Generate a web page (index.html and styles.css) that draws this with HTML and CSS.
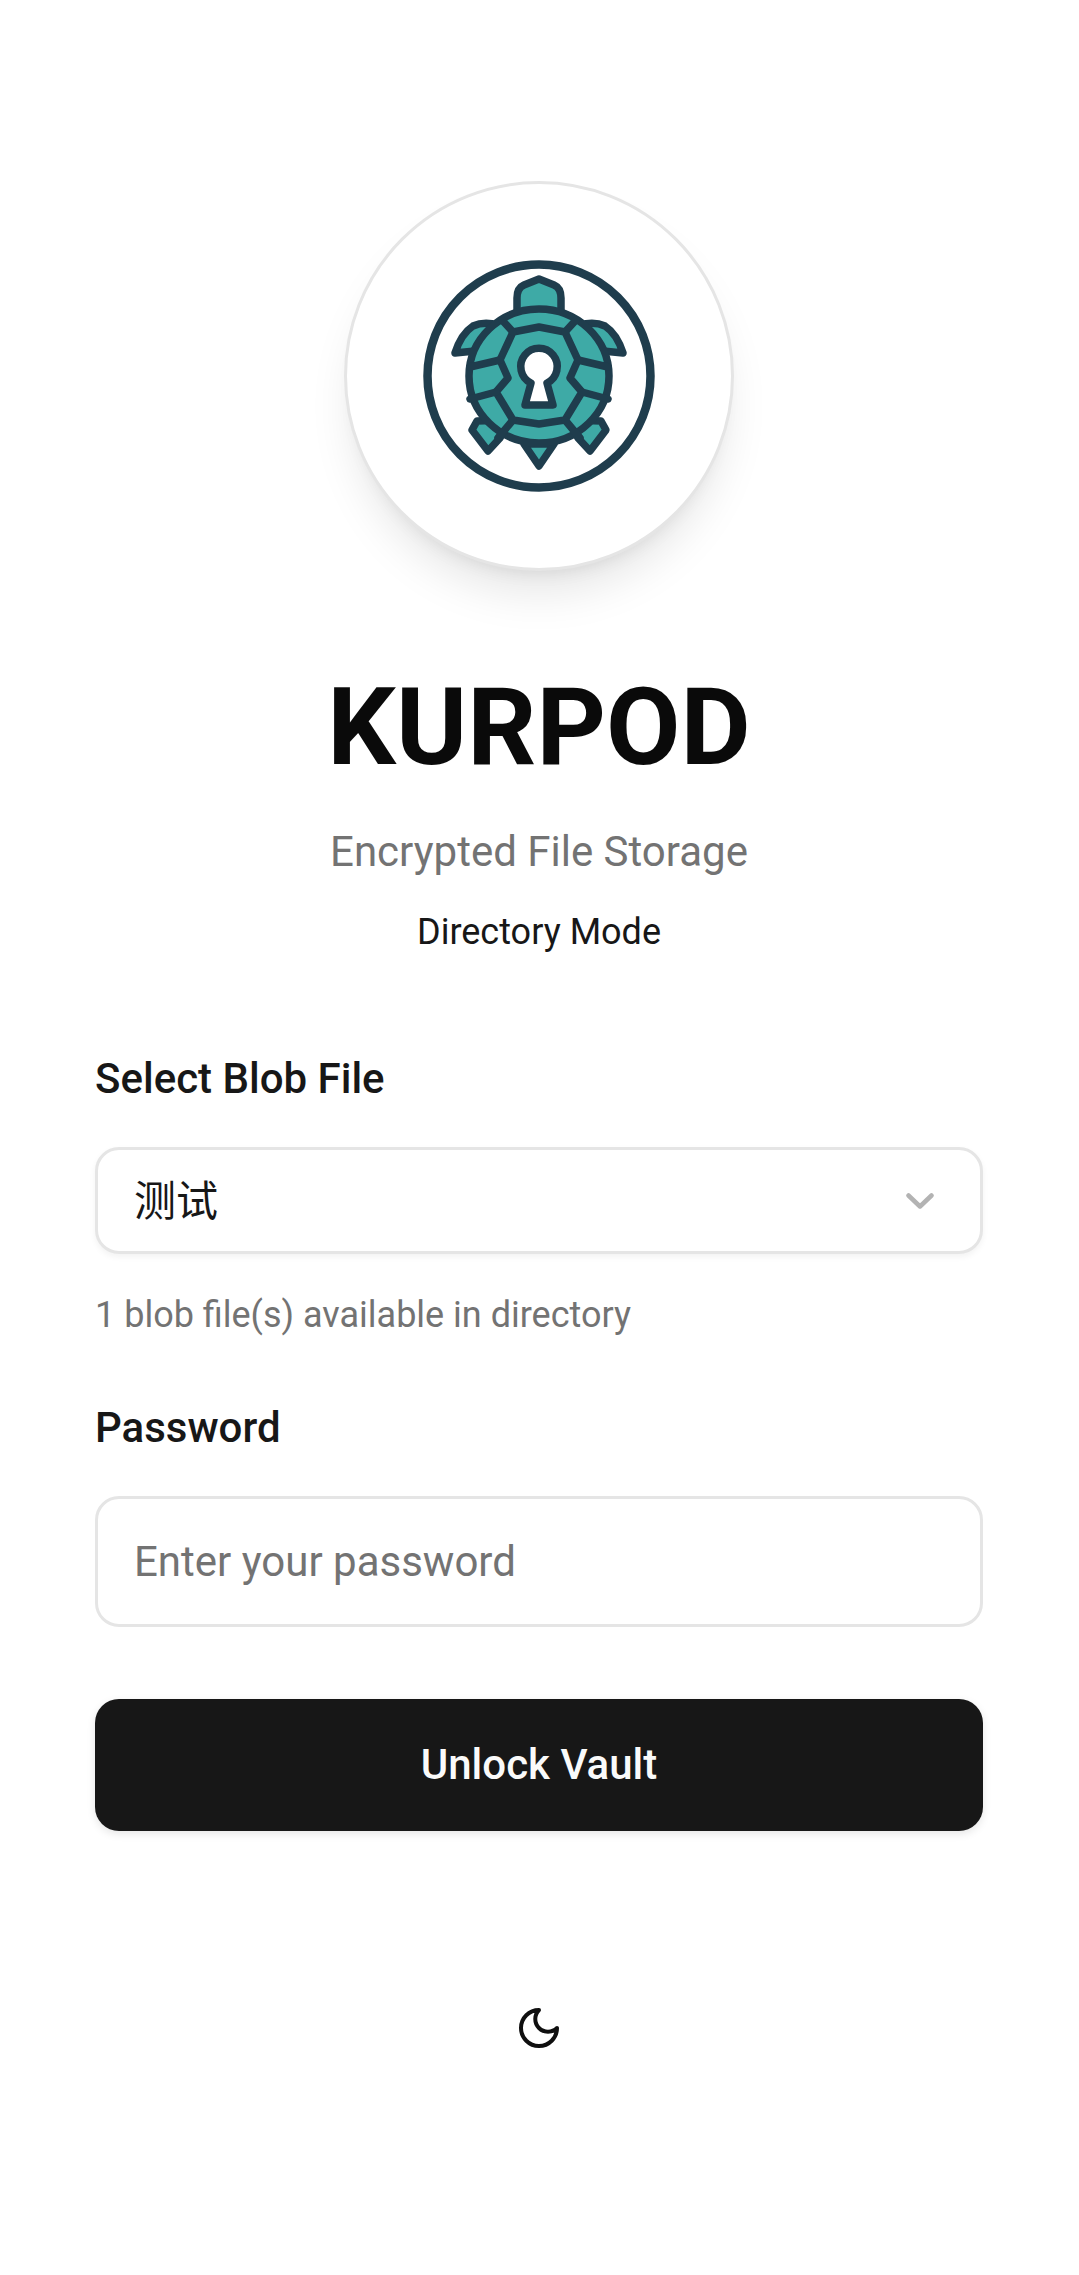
FILE: index.html
```html
<!doctype html>
<html>

<head>
    <title>KURPOD</title>
    <link rel="stylesheet" href="styles.css">
</head>

<body>
    <div id="login">
        <!-- Logo -->
        <div class="logoCircle">
            <svg class="logo" viewBox="-1 1 260 250" width="260" height="250">
                <circle cx="129" cy="126" r="111.500" fill="#fff" stroke="#1f3d4d" stroke-width="8.500" />
                <g fill="#3eaaa6" stroke="#1f3d4d" stroke-width="7.500" stroke-linejoin="round" stroke-linecap="round">
                    <path d="M107 62V48Q107 38 114 35L129 29 144 35Q151 38 151 48V62Z" />
                    <path d="M45 103Q51 84 63 76 74 71 88 75L65 101Z" />
                    <path d="M213 103Q207 84 195 76 184 71 170 75L193 101Z" />
                    <path d="M67 171 62 180 78 201 90 188 100 170Z" />
                    <path d="M191 171 196 180 180 201 168 188 158 170Z" />
                    <path d="M114 194 129 216 144 194Z" />
                    <ellipse cx="129" cy="126" rx="70" ry="67" />
                    <path d="M129 77 155 82 168 110 160 128 172 142 155 170 129 174 103 170 86 142 98 128 90 110 103 82Z" fill="none" />
                    <path d="M155 82 166 70M103 82 92 70M168 110 198 117M172 142 198 149M90 110 60 117M86 142 60 149M155 170 170 188M103 170 88 188" fill="none" />
                    <path d="M121 133A18.250 18.250 0 1 1 137 133L143 155H115Z" fill="#fff" />
                </g>
            </svg>
        </div>

        <h1 class="title">KURPOD</h1>
        <p class="subtitle">Encrypted File Storage</p>
        <p class="mode">Directory Mode</p>

        <form class="form">
            <label class="fieldLabel">Select Blob File</label>
            <div class="selectBox">
                <span class="selectValue">测试</span>
                <svg class="chevron" viewBox="0 0 28 16" width="28" height="16">
                    <path d="M2.500 2.500 14 13.500 25.500 2.500" fill="none" stroke="#b3b3b3" stroke-width="4.500" stroke-linecap="round" stroke-linejoin="round" />
                </svg>
            </div>
            <p class="hint">1 blob file(s) available in directory</p>

            <label class="fieldLabel passwordLabel">Password</label>
            <input class="passwordInput" type="password" placeholder="Enter your password">

            <button class="unlockBtn" type="button">Unlock Vault</button>
        </form>

        <!-- Theme toggle -->
        <div class="themeToggle">
            <svg viewBox="0 0 24 24" width="48" height="48" fill="none" stroke="#0f0f0f" stroke-width="2" stroke-linecap="round" stroke-linejoin="round">
                <path d="M12 3a6 6 0 0 0 9 9 9 9 0 1 1-9-9Z" />
            </svg>
        </div>
    </div>
</body>

</html>
```

FILE: styles.css
```css
* {
    box-sizing: border-box;
}

body {
    margin: 0;
    background: #fff;
    color: #0f0f0f;
    font-family: Roboto, "Noto Sans CJK SC", sans-serif;
}

#login {
    display: flex;
    flex-direction: column;
    align-items: center;
    padding: 181px 96px 0 95px;
    height: 2275px;
}

/* Logo */
.logoCircle {
    width: 390px;
    height: 390px;
    border: 3px solid #e5e5e5;
    border-radius: 50%;
    background: #fff;
    box-shadow: 0 30px 45px -9px rgba(0, 0, 0, 0.1), 0 12px 18px -12px rgba(0, 0, 0, 0.1);
    display: flex;
    align-items: center;
    justify-content: center;
    flex-shrink: 0;
}

.logo {
    display: block;
}

/* Heading */
.title {
    margin: 91px 0 0;
    font-size: 108px;
    line-height: 130px;
    font-weight: 700;
    color: #0a0a0a;
}

.subtitle {
    margin: 30px 0 0;
    font-size: 42px;
    line-height: 60px;
    color: #737373;
}

.mode {
    margin: 26px 0 0;
    font-size: 36px;
    line-height: 48px;
    color: #171717;
}

/* Form */
.form {
    width: 100%;
    display: flex;
    flex-direction: column;
    margin-top: 93px;
}

.fieldLabel {
    font-size: 42px;
    line-height: 60px;
    font-weight: 500;
    color: #171717;
}

.selectBox {
    margin-top: 38px;
    height: 107px;
    border: 3px solid #e5e5e5;
    border-radius: 24px;
    background: #fff;
    box-shadow: 0 3px 6px rgba(0, 0, 0, 0.05);
    padding: 0 46px 0 36px;
    display: flex;
    align-items: center;
    justify-content: space-between;
    font-size: 42px;
    color: #171717;
}

.selectValue {
    margin-bottom: 6px;
}

.hint {
    margin: 37px 0 0;
    font-size: 36px;
    line-height: 48px;
    color: #737373;
}

.passwordLabel {
    margin-top: 59px;
}

.passwordInput {
    margin-top: 38px;
    height: 131px;
    border: 3px solid #e5e5e5;
    border-radius: 24px;
    background: #fff;
    padding: 0 36px;
    font-family: inherit;
    font-size: 42px;
    color: #171717;
    outline: none;
}

.passwordInput::placeholder {
    color: #737373;
    opacity: 1;
}

.unlockBtn {
    margin-top: 72px;
    height: 132px;
    border: none;
    border-radius: 24px;
    padding: 0 0 2px;
    background: #171717;
    box-shadow: 0 3px 9px rgba(0, 0, 0, 0.1);
    color: #fafafa;
    font-family: inherit;
    font-size: 42px;
    font-weight: 500;
}

/* Theme toggle */
.themeToggle {
    margin-top: 173px;
    height: 48px;
}
```
